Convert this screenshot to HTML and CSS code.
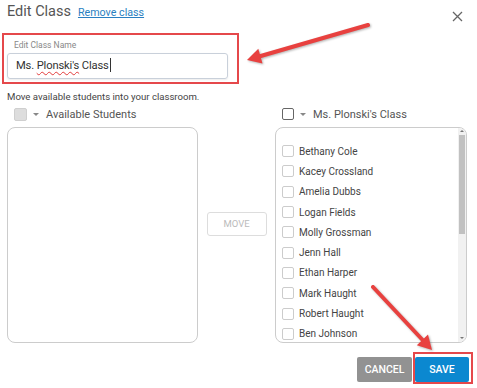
FILE: index.html
```html
<!DOCTYPE html>
<html>
<head>
<meta charset="utf-8">
<title>Edit Class</title>
<link rel="stylesheet" href="styles.css">
</head>
<body>
	<div class="dialog">
		<div class="head">
			<span class="title">Edit Class</span>
			<a class="remove" href="#">Remove class</a>
			<span class="close">
				<svg width="11" height="11" viewBox="0 0 11 11"><path d="M1 1L10 10M10 1L1 10" stroke="#666" stroke-width="1.3"/></svg>
			</span>
		</div>

		<!-- class name -->
		<div class="namefield">
			<div class="label">Edit Class Name</div>
			<div class="input"><span class="word">Ms.</span> <span class="typo">Plonski's</span> Class<span class="caret"></span></div>
		</div>

		<p class="hint">Move available students into your classroom.</p>

		<div class="transfer">
			<div class="col">
				<div class="colhead">
					<span class="check check-off"></span>
					<span class="caretdown"></span>
					<span>Available Students</span>
				</div>
				<div class="box"></div>
			</div>

			<button class="move">MOVE</button>

			<div class="col">
				<div class="colhead">
					<span class="check check-all"></span>
					<span class="caretdown"></span>
					<span>Ms. Plonski's Class</span>
				</div>
				<div class="box">
					<ul class="students">
						<li><span class="check"></span>Bethany Cole</li>
						<li><span class="check"></span>Kacey Crossland</li>
						<li><span class="check"></span>Amelia Dubbs</li>
						<li><span class="check"></span>Logan Fields</li>
						<li><span class="check"></span>Molly Grossman</li>
						<li><span class="check"></span>Jenn Hall</li>
						<li><span class="check"></span>Ethan Harper</li>
						<li><span class="check"></span>Mark Haught</li>
						<li><span class="check"></span>Robert Haught</li>
						<li><span class="check"></span>Ben Johnson</li>
					</ul>
					<div class="scrollbar">
						<span class="arrow up"></span>
						<span class="thumb"></span>
						<span class="arrow down"></span>
					</div>
				</div>
			</div>
		</div>

		<div class="foot">
			<button class="btn cancel">CANCEL</button>
			<button class="btn save">SAVE</button>
		</div>
	</div>

	<!-- annotations -->
	<svg class="notes" width="477" height="388" viewBox="0 0 477 388">
		<rect x="3" y="34" width="235" height="49" fill="none" stroke="#e5484b" stroke-width="2"/>
		<rect x="414" y="353" width="58" height="30" fill="none" stroke="#e5484b" stroke-width="2"/>
		<g class="arrow-shape">
			<line x1="368" y1="25" x2="259" y2="56.5" stroke="#e8413f" stroke-width="4" stroke-linecap="round"/>
			<polygon points="247,60 262.5,63.5 258.3,48.8" fill="#e8413f"/>
		</g>
		<g class="arrow-shape">
			<line x1="373" y1="287" x2="424" y2="341.5" stroke="#e8413f" stroke-width="4" stroke-linecap="round"/>
			<polygon points="432,350 416.8,345.2 428,334.6" fill="#e8413f"/>
		</g>
	</svg>
</body>
</html>
```

FILE: styles.css
```css
body {
	margin: 0;
	background: #fff;
	font-family: Roboto, "Liberation Sans", sans-serif;
	color: #444;
}

.dialog {
	width: 477px;
	height: 388px;
	padding: 0 8px 0 7px;
	box-sizing: border-box;
}

.head {
	display: flex;
	align-items: baseline;
	height: 28px;
	padding-top: 2px;
	box-sizing: border-box;
}

.title {
	font-size: 14.5px;
	line-height: 20px;
	color: #555;
}

.remove {
	margin-left: 7px;
	font-size: 10.7px;
	color: #2a7fc1;
	text-decoration: underline;
}

.close {
	margin-left: auto;
	margin-right: 6px;
	align-self: flex-start;
	margin-top: 5px;
}

.namefield {
	margin-top: 11px;
}

.label {
	font-size: 8.5px;
	line-height: 12px;
	color: #888;
	margin-left: 7px;
	margin-bottom: 2px;
}

.input {
	width: 221px;
	height: 26px;
	box-sizing: border-box;
	border: 1px solid #c9d0da;
	border-radius: 3px;
	box-shadow: 0 1px 2px rgba(0, 0, 0, 0.08);
	padding-left: 8px;
	font-size: 11.2px;
	letter-spacing: -0.15px;
	line-height: 24px;
	color: #333;
}

.typo {
	text-decoration: underline wavy #e23b3b;
	text-decoration-thickness: 1px;
	text-underline-offset: 2px;
}

.caret {
	display: inline-block;
	width: 1px;
	height: 14px;
	background: #333;
	vertical-align: -3px;
	margin-left: 1px;
}

.hint {
	margin: 12px 0 0;
	font-size: 9.6px;
	line-height: 12px;
	color: #444;
}

.transfer {
	display: grid;
	grid-template-columns: 191px 60px 192px;
	column-gap: 8.5px;
	align-items: center;
	margin-top: 1px;
}

.col {
	display: flex;
	flex-direction: column;
	gap: 3px;
}

.colhead {
	display: flex;
	align-items: center;
	height: 20px;
	font-size: 11px;
	color: #555;
	padding-left: 7px;
}

.check {
	display: inline-block;
	width: 10px;
	height: 10px;
	border: 1px solid #ccc;
	border-radius: 2px;
	background: #fff;
	flex: none;
}

.check-off {
	width: 11px;
	height: 11px;
	background: #ddd;
	border-color: #cfcfcf;
}

.check-all {
	width: 10px;
	height: 10px;
	border-color: #666;
}

.caretdown {
	width: 0;
	height: 0;
	border-left: 3px solid transparent;
	border-right: 3px solid transparent;
	border-top: 3px solid #888;
	margin: 0 7px 0 6px;
}

.box {
	position: relative;
	height: 216px;
	box-sizing: border-box;
	border: 1px solid #ccc;
	border-radius: 8px;
	overflow: hidden;
}

.move {
	width: 60px;
	height: 24px;
	border: 1px solid #ddd;
	border-radius: 3px;
	background: #fff;
	font-family: Roboto, "Liberation Sans", sans-serif;
	font-size: 9.5px;
	color: #bbb;
	padding: 0;
}

.students {
	list-style: none;
	margin: 0;
	padding: 13px 0 0 6px;
}

.students li {
	display: flex;
	align-items: center;
	gap: 5px;
	height: 20.3px;
	font-size: 10px;
	color: #444;
}

.scrollbar {
	position: absolute;
	top: 0;
	right: 0;
	bottom: 0;
	width: 8px;
	background: #f1f1f1;
}

.thumb {
	position: absolute;
	top: 7px;
	left: 1px;
	width: 6px;
	height: 99px;
	background: #c1c1c1;
}

.arrow {
	position: absolute;
	left: 2px;
	width: 0;
	height: 0;
	border-left: 2px solid transparent;
	border-right: 2px solid transparent;
}

.arrow.up {
	top: 2px;
	border-bottom: 2px solid #777;
}

.arrow.down {
	bottom: 3px;
	border-top: 2px solid #777;
}

.foot {
	display: flex;
	justify-content: flex-end;
	gap: 3px;
	margin-top: 14px;
}

.btn {
	height: 25px;
	border: none;
	border-radius: 2px;
	color: #fff;
	font-family: Roboto, "Liberation Sans", sans-serif;
	font-size: 10.5px;
	font-weight: 500;
	padding: 0;
}

.cancel {
	width: 55px;
	background: #929292;
}

.save {
	width: 54px;
	background: #0b88d0;
}

.notes {
	position: absolute;
	top: 0;
	left: 0;
	pointer-events: none;
}

.arrow-shape {
	filter: drop-shadow(1px 1px 1px rgba(0, 0, 0, 0.3));
}
```
